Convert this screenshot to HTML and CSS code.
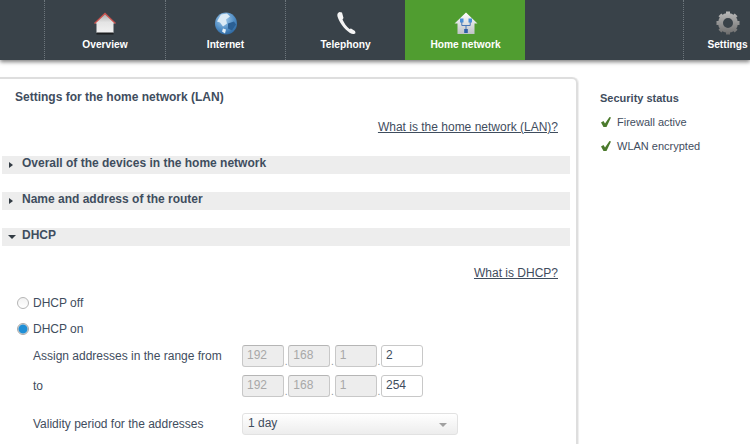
FILE: index.html
```html
<!DOCTYPE html>
<html lang="en">
<head>
<meta charset="utf-8">
<title>Home network</title>
<link rel="stylesheet" href="styles.css">
</head>
<body>
<header class="topbar">
  <nav class="tabs">
    <a class="tab tab-overview">
      <svg class="tab-icon" viewBox="0 0 24 24" width="24" height="24">
        <defs><linearGradient id="hg" x1="0" y1="0" x2="0" y2="1"><stop offset="0" stop-color="#a8a8a8"/><stop offset="0.45" stop-color="#e4e4e4"/><stop offset="1" stop-color="#f2f2f2"/></linearGradient></defs>
        <path d="M12 2.500 22.500 12 20.500 12.500V22H3.500V12.500L1.500 12Z" fill="url(#hg)"/>
        <path d="M1.500 12.500 12 2.500 22.500 12.500" fill="none" stroke="#c9504c" stroke-width="1.300"/>
        <rect x="3.500" y="21.500" width="17" height="2" fill="#1d1f21"/>
      </svg>
      <span>Overview</span>
    </a>
    <a class="tab tab-internet">
      <svg class="tab-icon" viewBox="0 0 24 24" width="24" height="24">
        <defs><radialGradient id="gl" cx="0.4" cy="0.3" r="0.8"><stop offset="0" stop-color="#a9d0ee"/><stop offset="0.6" stop-color="#4f8cc4"/><stop offset="1" stop-color="#245c94"/></radialGradient></defs>
        <circle cx="12" cy="12.500" r="11" fill="url(#gl)"/>
        <path d="M7 3.500 13 2.500 16 5.500 12 8.500 13 12.500 9 15.500 6 11.500 3 10.500Z" fill="#dcebf6"/>
        <path d="M14 12.500 20 10.500 22 13.500 18 19.500 14 17.500Z" fill="#2b5f93"/>
        <path d="M9 17.500 12 18.500 11 22.500 8 20.500Z" fill="#e4eff7"/>
      </svg>
      <span>Internet</span>
    </a>
    <a class="tab tab-telephony">
      <svg class="tab-icon" viewBox="0 0 24 24" width="24" height="24">
        <path d="M5.500 1 C3.500 1.500 3 3.500 3.500 5.500 C5 11 10 18 16 22 C18 23.300 20.500 23.500 21.500 22 L21 20 L17 17.500 L15.500 18 C12.500 15.500 10 12 8.500 8.500 L9.500 7 L8 1.500Z" fill="#f4f4f4"/>
      </svg>
      <span>Telephony</span>
    </a>
    <a class="tab tab-home is-active">
      <svg class="tab-icon" viewBox="0 0 24 24" width="24" height="24">
        <defs><linearGradient id="hn" x1="0" y1="0" x2="0" y2="1"><stop offset="0" stop-color="#ffffff"/><stop offset="1" stop-color="#bfc3c7"/></linearGradient></defs>
        <path d="M12 1.500 23.500 12.500 20.500 12.500V23H3.500V12.500H0.500Z" fill="url(#hn)"/>
        <g fill="#4a8fd8"><rect x="6" y="7.500" width="3.500" height="4"/><rect x="14.500" y="7.500" width="3.500" height="4"/></g>
        <path d="M7.800 11V14.500H16.200V11M12 14.500V19" fill="none" stroke="#4a78b8" stroke-width="1"/>
        <rect x="10.200" y="18" width="3.600" height="4" fill="#2f5fa8"/>
      </svg>
      <span>Home network</span>
    </a>
    <a class="tab tab-settings">
      <svg class="tab-icon" viewBox="0 0 24 24" width="24" height="24">
        <defs><linearGradient id="gr" gradientUnits="userSpaceOnUse" x1="0" y1="0" x2="0" y2="24"><stop offset="0" stop-color="#bdbdbd"/><stop offset="1" stop-color="#6a6a6a"/></linearGradient></defs>
        <circle cx="12" cy="12" r="7.500" fill="none" stroke="url(#gr)" stroke-width="5"/>
        <path d="M12 0.500V5M12 19V23.500M0.500 12H5M19 12H23.500M3.900 3.900 7 7M17 17 20.100 20.100M20.100 3.900 17 7M7 17 3.900 20.100" fill="none" stroke="url(#gr)" stroke-width="4"/>
      </svg>
      <span>Settings</span>
    </a>
  </nav>
</header>

<main class="layout">
  <section class="panel">
    <h1 class="panel-title">Settings for the home network (LAN)</h1>
    <p class="help-row help-row-lan"><a class="help-link">What is the home network (LAN)?</a></p>

    <div class="accordion"><span class="arrow arrow-right"></span>Overall of the devices in the home network</div>
    <div class="accordion"><span class="arrow arrow-right"></span>Name and address of the router</div>
    <div class="accordion"><span class="arrow arrow-down"></span>DHCP</div>

    <p class="help-row help-row-dhcp"><a class="help-link">What is DHCP?</a></p>

    <div class="radio-row"><span class="radio"></span>DHCP off</div>
    <div class="radio-row"><span class="radio radio-on"></span>DHCP on</div>

    <div class="field-row field-first">
      <label class="field-label">Assign addresses in the range from</label>
      <div class="ip">
        <span class="octet octet-off">192</span><i>.</i><span class="octet octet-off">168</span><i>.</i><span class="octet octet-off">1</span><i>.</i><span class="octet">2</span>
      </div>
    </div>
    <div class="field-row field-second">
      <label class="field-label">to</label>
      <div class="ip">
        <span class="octet octet-off">192</span><i>.</i><span class="octet octet-off">168</span><i>.</i><span class="octet octet-off">1</span><i>.</i><span class="octet">254</span>
      </div>
    </div>
    <div class="field-row field-third">
      <label class="field-label">Validity period for the addresses</label>
      <div class="select">1 day<span class="select-arrow"></span></div>
    </div>
  </section>

  <aside class="status">
    <h2 class="status-title">Security status</h2>
    <div class="status-item">
      <svg class="check" viewBox="0 0 12 12" width="12" height="12"><path d="M1 6.500 3.500 5 5 7.500 9.500 1 11 1.500 6.500 11H3.500Z" fill="#4b7a2c"/></svg>
      Firewall active
    </div>
    <div class="status-item">
      <svg class="check" viewBox="0 0 12 12" width="12" height="12"><path d="M1 6.500 3.500 5 5 7.500 9.500 1 11 1.500 6.500 11H3.500Z" fill="#4b7a2c"/></svg>
      WLAN encrypted
    </div>
  </aside>
</main>
</body>
</html>
```

FILE: styles.css
```css
* { box-sizing: border-box; }

html, body {
  margin: 0;
  height: 444px;
  overflow: hidden;
  background: #fff;
}

body {
  font-family: "Liberation Sans", Arial, sans-serif;
  font-size: 12px;
  color: #3f4d5e;
}

.topbar {
  height: 60px;
  background: #394249;
  box-shadow: 0 2px 4px rgba(0, 0, 0, 0.5);
}

.tabs {
  display: flex;
  height: 60px;
  padding-left: 44px;
  overflow: hidden;
}

.tab {
  display: flex;
  flex: none;
  flex-direction: column;
  align-items: center;
  width: 121px;
  height: 60px;
  padding-top: 11px;
  border-left: 1px dotted #6d767c;
  color: #fff;
  font-weight: bold;
  font-size: 10.2px;
}

.tab-icon { display: block; margin-bottom: 3px; }
.tab span { line-height: 14px; white-space: nowrap; }

.tab-internet, .tab-telephony { width: 120px; }

.tab.is-active {
  width: 120px;
  background: #509d30;
  border-left-color: #509d30;
}

.tab-settings {
  width: 88px;
  margin-left: 158px;
}

.layout {
  display: flex;
  padding-top: 17px;
}

.panel {
  flex: none;
  width: 582px;
  height: 380px;
  margin-left: -4px;
  padding: 11px 0 0 4px;
  border: 2px solid #dedede;
  border-bottom: 0;
  border-top-right-radius: 6px;
  box-shadow: 1px 0 1px #eeeeee;
}

.panel-title {
  margin: 0 0 0 13px;
  font-size: 12px;
  line-height: 14px;
  font-weight: bold;
}

.help-row {
  margin: 0;
  padding-right: 18px;
  text-align: right;
  line-height: 14px;
}

.help-row-lan { margin-top: 16px; margin-bottom: 22px; }
.help-row-dhcp { margin-top: 20px; margin-bottom: 16px; }

.help-link { text-decoration: underline; color: #3f4d5e; }

.accordion {
  position: relative;
  width: 568px;
  height: 18px;
  margin-bottom: 18px;
  padding-left: 20px;
  background: #ededed;
  font-weight: bold;
  line-height: 14px;
}

.arrow { position: absolute; }

.arrow-right {
  left: 7px;
  top: 6px;
  border-left: 4px solid #333c44;
  border-top: 3.5px solid transparent;
  border-bottom: 3.5px solid transparent;
}

.arrow-down {
  left: 6px;
  top: 7px;
  border-top: 4px solid #333c44;
  border-left: 4px solid transparent;
  border-right: 4px solid transparent;
}

.radio-row {
  display: flex;
  align-items: center;
  height: 14px;
  margin-bottom: 12px;
  margin-left: 15px;
}

.radio {
  width: 12px;
  height: 12px;
  margin-right: 4px;
  border: 1px solid #b5b5b5;
  border-radius: 50%;
  background: linear-gradient(#f2f2f2, #ffffff);
}

.radio-on {
  border: 1px solid #a8a8a8;
  background: radial-gradient(circle, #1f8fd6 0 4px, #dcdcdc 5px);
}

.field-row {
  display: flex;
  align-items: center;
  margin-left: 31px;
}

.field-first { margin-top: -3px; }
.field-second { margin-top: 8px; }
.field-third { margin-top: 16px; }

.field-label { width: 209px; flex: none; }

.ip { display: flex; align-items: flex-end; }
.ip i { width: 4.33px; text-align: center; font-style: normal; color: #8a8f94; font-size: 10px; line-height: 10px; }

.octet {
  width: 42px;
  height: 22px;
  padding-left: 4px;
  border: 1px solid #c8c8c8;
  border-radius: 3px;
  background: #fff;
  line-height: 19px;
}

.octet-off {
  background: #ededed;
  color: #a8a8a8;
  border-top-color: #b5b5b5;
}

.select {
  position: relative;
  width: 216px;
  height: 22px;
  padding-left: 5px;
  border: 1px solid #e2e2e2;
  border-radius: 3px;
  background: linear-gradient(#ffffff, #ededed);
  line-height: 18px;
}

.select-arrow {
  position: absolute;
  right: 10px;
  top: 9px;
  border-top: 4px solid #a0a0a0;
  border-left: 4px solid transparent;
  border-right: 4px solid transparent;
}

.status {
  padding: 15px 0 0 22px;
  font-size: 11px;
}

.status-title {
  margin: 0 0 10px;
  font-size: 11px;
  line-height: 13px;
  font-weight: bold;
}

.status-item {
  display: flex;
  align-items: center;
  gap: 5px;
  height: 13px;
  margin-bottom: 11px;
}
```
